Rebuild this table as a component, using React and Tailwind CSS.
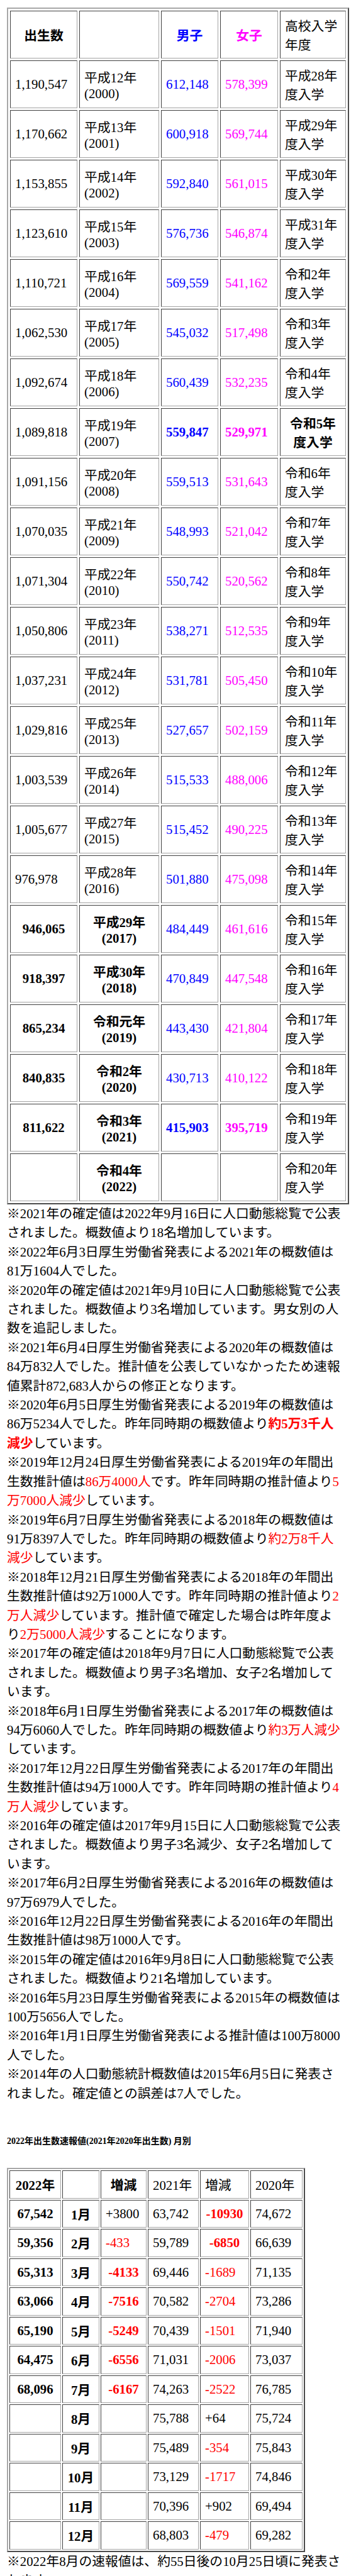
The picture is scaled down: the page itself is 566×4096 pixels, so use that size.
const births = [
  { total: '1,190,547', era: '平成12年', year: 2000, boys: '612,148', girls: '578,399', entry: '平成28年度入学' },
  { total: '1,170,662', era: '平成13年', year: 2001, boys: '600,918', girls: '569,744', entry: '平成29年度入学' },
  { total: '1,153,855', era: '平成14年', year: 2002, boys: '592,840', girls: '561,015', entry: '平成30年度入学' },
  { total: '1,123,610', era: '平成15年', year: 2003, boys: '576,736', girls: '546,874', entry: '平成31年度入学' },
  { total: '1,110,721', era: '平成16年', year: 2004, boys: '569,559', girls: '541,162', entry: '令和2年度入学' },
  { total: '1,062,530', era: '平成17年', year: 2005, boys: '545,032', girls: '517,498', entry: '令和3年度入学' },
  { total: '1,092,674', era: '平成18年', year: 2006, boys: '560,439', girls: '532,235', entry: '令和4年度入学' },
  { total: '1,089,818', era: '平成19年', year: 2007, boys: '559,847', girls: '529,971', entry: '令和5年度入学', now: true },
  { total: '1,091,156', era: '平成20年', year: 2008, boys: '559,513', girls: '531,643', entry: '令和6年度入学' },
  { total: '1,070,035', era: '平成21年', year: 2009, boys: '548,993', girls: '521,042', entry: '令和7年度入学' },
  { total: '1,071,304', era: '平成22年', year: 2010, boys: '550,742', girls: '520,562', entry: '令和8年度入学' },
  { total: '1,050,806', era: '平成23年', year: 2011, boys: '538,271', girls: '512,535', entry: '令和9年度入学' },
  { total: '1,037,231', era: '平成24年', year: 2012, boys: '531,781', girls: '505,450', entry: '令和10年度入学' },
  { total: '1,029,816', era: '平成25年', year: 2013, boys: '527,657', girls: '502,159', entry: '令和11年度入学' },
  { total: '1,003,539', era: '平成26年', year: 2014, boys: '515,533', girls: '488,006', entry: '令和12年度入学' },
  { total: '1,005,677', era: '平成27年', year: 2015, boys: '515,452', girls: '490,225', entry: '令和13年度入学' },
  { total: '976,978', era: '平成28年', year: 2016, boys: '501,880', girls: '475,098', entry: '令和14年度入学' },
  { total: '946,065', era: '平成29年', year: 2017, boys: '484,449', girls: '461,616', entry: '令和15年度入学', recent: true },
  { total: '918,397', era: '平成30年', year: 2018, boys: '470,849', girls: '447,548', entry: '令和16年度入学', recent: true },
  { total: '865,234', era: '令和元年', year: 2019, boys: '443,430', girls: '421,804', entry: '令和17年度入学', recent: true },
  { total: '840,835', era: '令和2年', year: 2020, boys: '430,713', girls: '410,122', entry: '令和18年度入学', recent: true },
  { total: '811,622', era: '令和3年', year: 2021, boys: '415,903', girls: '395,719', entry: '令和19年度入学', recent: true, boldSex: true },
  { total: '', era: '令和4年', year: 2022, boys: '', girls: '', entry: '令和20年度入学', recent: true },
];

// 増減: 'up' = 黒, 'down' = 赤, 'big' = 赤太字(中央)
const months = [
  { y22: '67,542', m: '1月', d22: '+3800', k22: 'up', y21: '63,742', d21: '-10930', k21: 'big', y20: '74,672' },
  { y22: '59,356', m: '2月', d22: '-433', k22: 'down', y21: '59,789', d21: '-6850', k21: 'big', y20: '66,639' },
  { y22: '65,313', m: '3月', d22: '-4133', k22: 'big', y21: '69,446', d21: '-1689', k21: 'down', y20: '71,135' },
  { y22: '63,066', m: '4月', d22: '-7516', k22: 'big', y21: '70,582', d21: '-2704', k21: 'down', y20: '73,286' },
  { y22: '65,190', m: '5月', d22: '-5249', k22: 'big', y21: '70,439', d21: '-1501', k21: 'down', y20: '71,940' },
  { y22: '64,475', m: '6月', d22: '-6556', k22: 'big', y21: '71,031', d21: '-2006', k21: 'down', y20: '73,037' },
  { y22: '68,096', m: '7月', d22: '-6167', k22: 'big', y21: '74,263', d21: '-2522', k21: 'down', y20: '76,785' },
  { y22: '', m: '8月', d22: '', k22: 'up', y21: '75,788', d21: '+64', k21: 'up', y20: '75,724' },
  { y22: '', m: '9月', d22: '', k22: 'up', y21: '75,489', d21: '-354', k21: 'down', y20: '75,843' },
  { y22: '', m: '10月', d22: '', k22: 'up', y21: '73,129', d21: '-1717', k21: 'down', y20: '74,846' },
  { y22: '', m: '11月', d22: '', k22: 'up', y21: '70,396', d21: '+902', k21: 'up', y20: '69,494' },
  { y22: '', m: '12月', d22: '', k22: 'up', y21: '68,803', d21: '-479', k21: 'down', y20: '69,282' },
];

const cell = 'border border-t-[#404040] border-l-[#404040] border-r-[#a4a4a4] border-b-[#a4a4a4] px-[7px] align-middle';
const c1 = `${cell} h-[76px]`;
const c2 = `${cell} h-[44.5px] whitespace-nowrap`;
const frame = 'border-2 border-t-[#a8a8a8] border-l-[#a8a8a8] border-r-[#4c4c4c] border-b-[#4c4c4c] border-separate table-fixed';

const diffClass = (k) =>
  k === 'big' ? 'text-center font-bold text-[#ff0000]' : k === 'down' ? 'text-[#ff0000]' : '';

function Red({ bold, children }) {
  return <span className={bold ? 'text-[#ff0000] font-bold' : 'text-[#ff0000]'}>{children}</span>;
}

export default function App() {
  return (
    <div className="min-h-screen bg-white pl-[11px] pr-[12px] pt-[12px] text-black text-[20.8px] font-['Liberation_Serif','Noto_Sans_CJK_JP',serif]">
      <table className={`w-full ${frame} border-spacing-[3px] leading-[normal]`}>
        <tbody>
          <tr>
            <td className={`${c1} w-[107px] text-center font-bold`}>出生数</td>
            <td className={`${c1} w-[127px]`}></td>
            <td className={`${c1} w-[91px] text-center font-bold text-[#0000ff]`}>男子</td>
            <td className={`${c1} w-[92px] text-center font-bold text-[#ff00ff]`}>女子</td>
            <td className={`${c1} w-[105px]`}>高校入学年度</td>
          </tr>
          {births.map((r) => (
            <tr key={r.year}>
              <td className={`${c1} ${r.recent ? 'text-center font-bold' : ''}`}>{r.total}</td>
              <td className={`${c1} ${r.recent ? 'text-center font-bold' : ''}`}>
                {r.era}({r.year})
              </td>
              <td className={`${c1} text-[#0000ff] ${r.now || r.boldSex ? 'font-bold' : ''}`}>{r.boys}</td>
              <td className={`${c1} text-[#ff00ff] ${r.now || r.boldSex ? 'font-bold' : ''}`}>{r.girls}</td>
              <td className={`${c1} ${r.now ? 'text-center font-bold' : ''}`}>{r.entry}</td>
            </tr>
          ))}
        </tbody>
      </table>

      <div className="leading-[30.4px]">
        <p>※2021年の確定値は2022年9月16日に人口動態総覧で公表<br />されました。概数値より18名増加しています。</p>
        <p>※2022年6月3日厚生労働省発表による2021年の概数値は<br />81万1604人でした。</p>
        <p>※2020年の確定値は2021年9月10日に人口動態総覧で公表<br />されました。概数値より3名増加しています。男女別の人<br />数を追記しました。</p>
        <p>※2021年6月4日厚生労働省発表による2020年の概数値は<br />84万832人でした。推計値を公表していなかったため速報<br />値累計872,683人からの修正となります。</p>
        <p>
          ※2020年6月5日厚生労働省発表による2019年の概数値は<br />86万5234人でした。昨年同時期の概数値より
          <Red bold>約5万3千人<br />減少</Red>しています。
        </p>
        <p>
          ※2019年12月24日厚生労働省発表による2019年の年間出<br />生数推計値は<Red>86万4000人</Red>です。昨年同時期の推計値より
          <Red>5<br />万7000人減少</Red>しています。
        </p>
        <p>
          ※2019年6月7日厚生労働省発表による2018年の概数値は<br />91万8397人でした。昨年同時期の概数値より
          <Red>約2万8千人<br />減少</Red>しています。
        </p>
        <p>
          ※2018年12月21日厚生労働省発表による2018年の年間出<br />生数推計値は92万1000人です。昨年同時期の推計値より
          <Red>2<br />万人減少</Red>しています。推計値で確定した場合は昨年度よ<br />り<Red>2万5000人減少</Red>することになります。
        </p>
        <p>※2017年の確定値は2018年9月7日に人口動態総覧で公表<br />されました。概数値より男子3名増加、女子2名増加して<br />います。</p>
        <p>
          ※2018年6月1日厚生労働省発表による2017年の概数値は<br />94万6060人でした。昨年同時期の概数値より
          <Red>約3万人減少</Red><br />しています。
        </p>
        <p>
          ※2017年12月22日厚生労働省発表による2017年の年間出<br />生数推計値は94万1000人です。昨年同時期の推計値より
          <Red>4<br />万人減少</Red>しています。
        </p>
        <p>※2016年の確定値は2017年9月15日に人口動態総覧で公表<br />されました。概数値より男子3名減少、女子2名増加して<br />います。</p>
        <p>※2017年6月2日厚生労働省発表による2016年の概数値は<br />97万6979人でした。</p>
        <p>※2016年12月22日厚生労働省発表による2016年の年間出<br />生数推計値は98万1000人です。</p>
        <p>※2015年の確定値は2016年9月8日に人口動態総覧で公表<br />されました。概数値より21名増加しています。</p>
        <p>※2016年5月23日厚生労働省発表による2015年の概数値は<br />100万5656人でした。</p>
        <p>※2016年1月1日厚生労働省発表による推計値は100万8000<br />人でした。</p>
        <p>※2014年の人口動態統計概数値は2015年6月5日に発表さ<br />れました。確定値との誤差は7人でした。</p>
      </div>

      <p className="mt-[51px] text-[14px] leading-[20px] font-bold">2022年出生数速報値(2021年2020年出生数) 月別</p>

      <table className={`mt-[32px] w-[474px] ${frame} border-spacing-[2px] leading-[normal]`}>
        <tbody>
          <tr>
            <td className={`${c2} w-[82px] text-center font-bold`}>2022年</td>
            <td className={`${c2} w-[59px]`}></td>
            <td className={`${c2} w-[73px] text-center font-bold`}>増減</td>
            <td className={`${c2} w-[81px]`}>2021年</td>
            <td className={`${c2} w-[78px]`}>増減</td>
            <td className={`${c2} w-[83px]`}>2020年</td>
          </tr>
          {months.map((r) => (
            <tr key={r.m}>
              <td className={`${c2} text-center font-bold`}>{r.y22}</td>
              <td className={`${c2} text-center font-bold`}>{r.m}</td>
              <td className={`${c2} ${diffClass(r.k22)}`}>{r.d22}</td>
              <td className={c2}>{r.y21}</td>
              <td className={`${c2} ${diffClass(r.k21)}`}>{r.d21}</td>
              <td className={c2}>{r.y20}</td>
            </tr>
          ))}
        </tbody>
      </table>

      <p className="leading-[30.4px]">※2022年8月の速報値は、約55日後の10月25日頃に発表さ<br />れます。</p>
    </div>
  );
}
